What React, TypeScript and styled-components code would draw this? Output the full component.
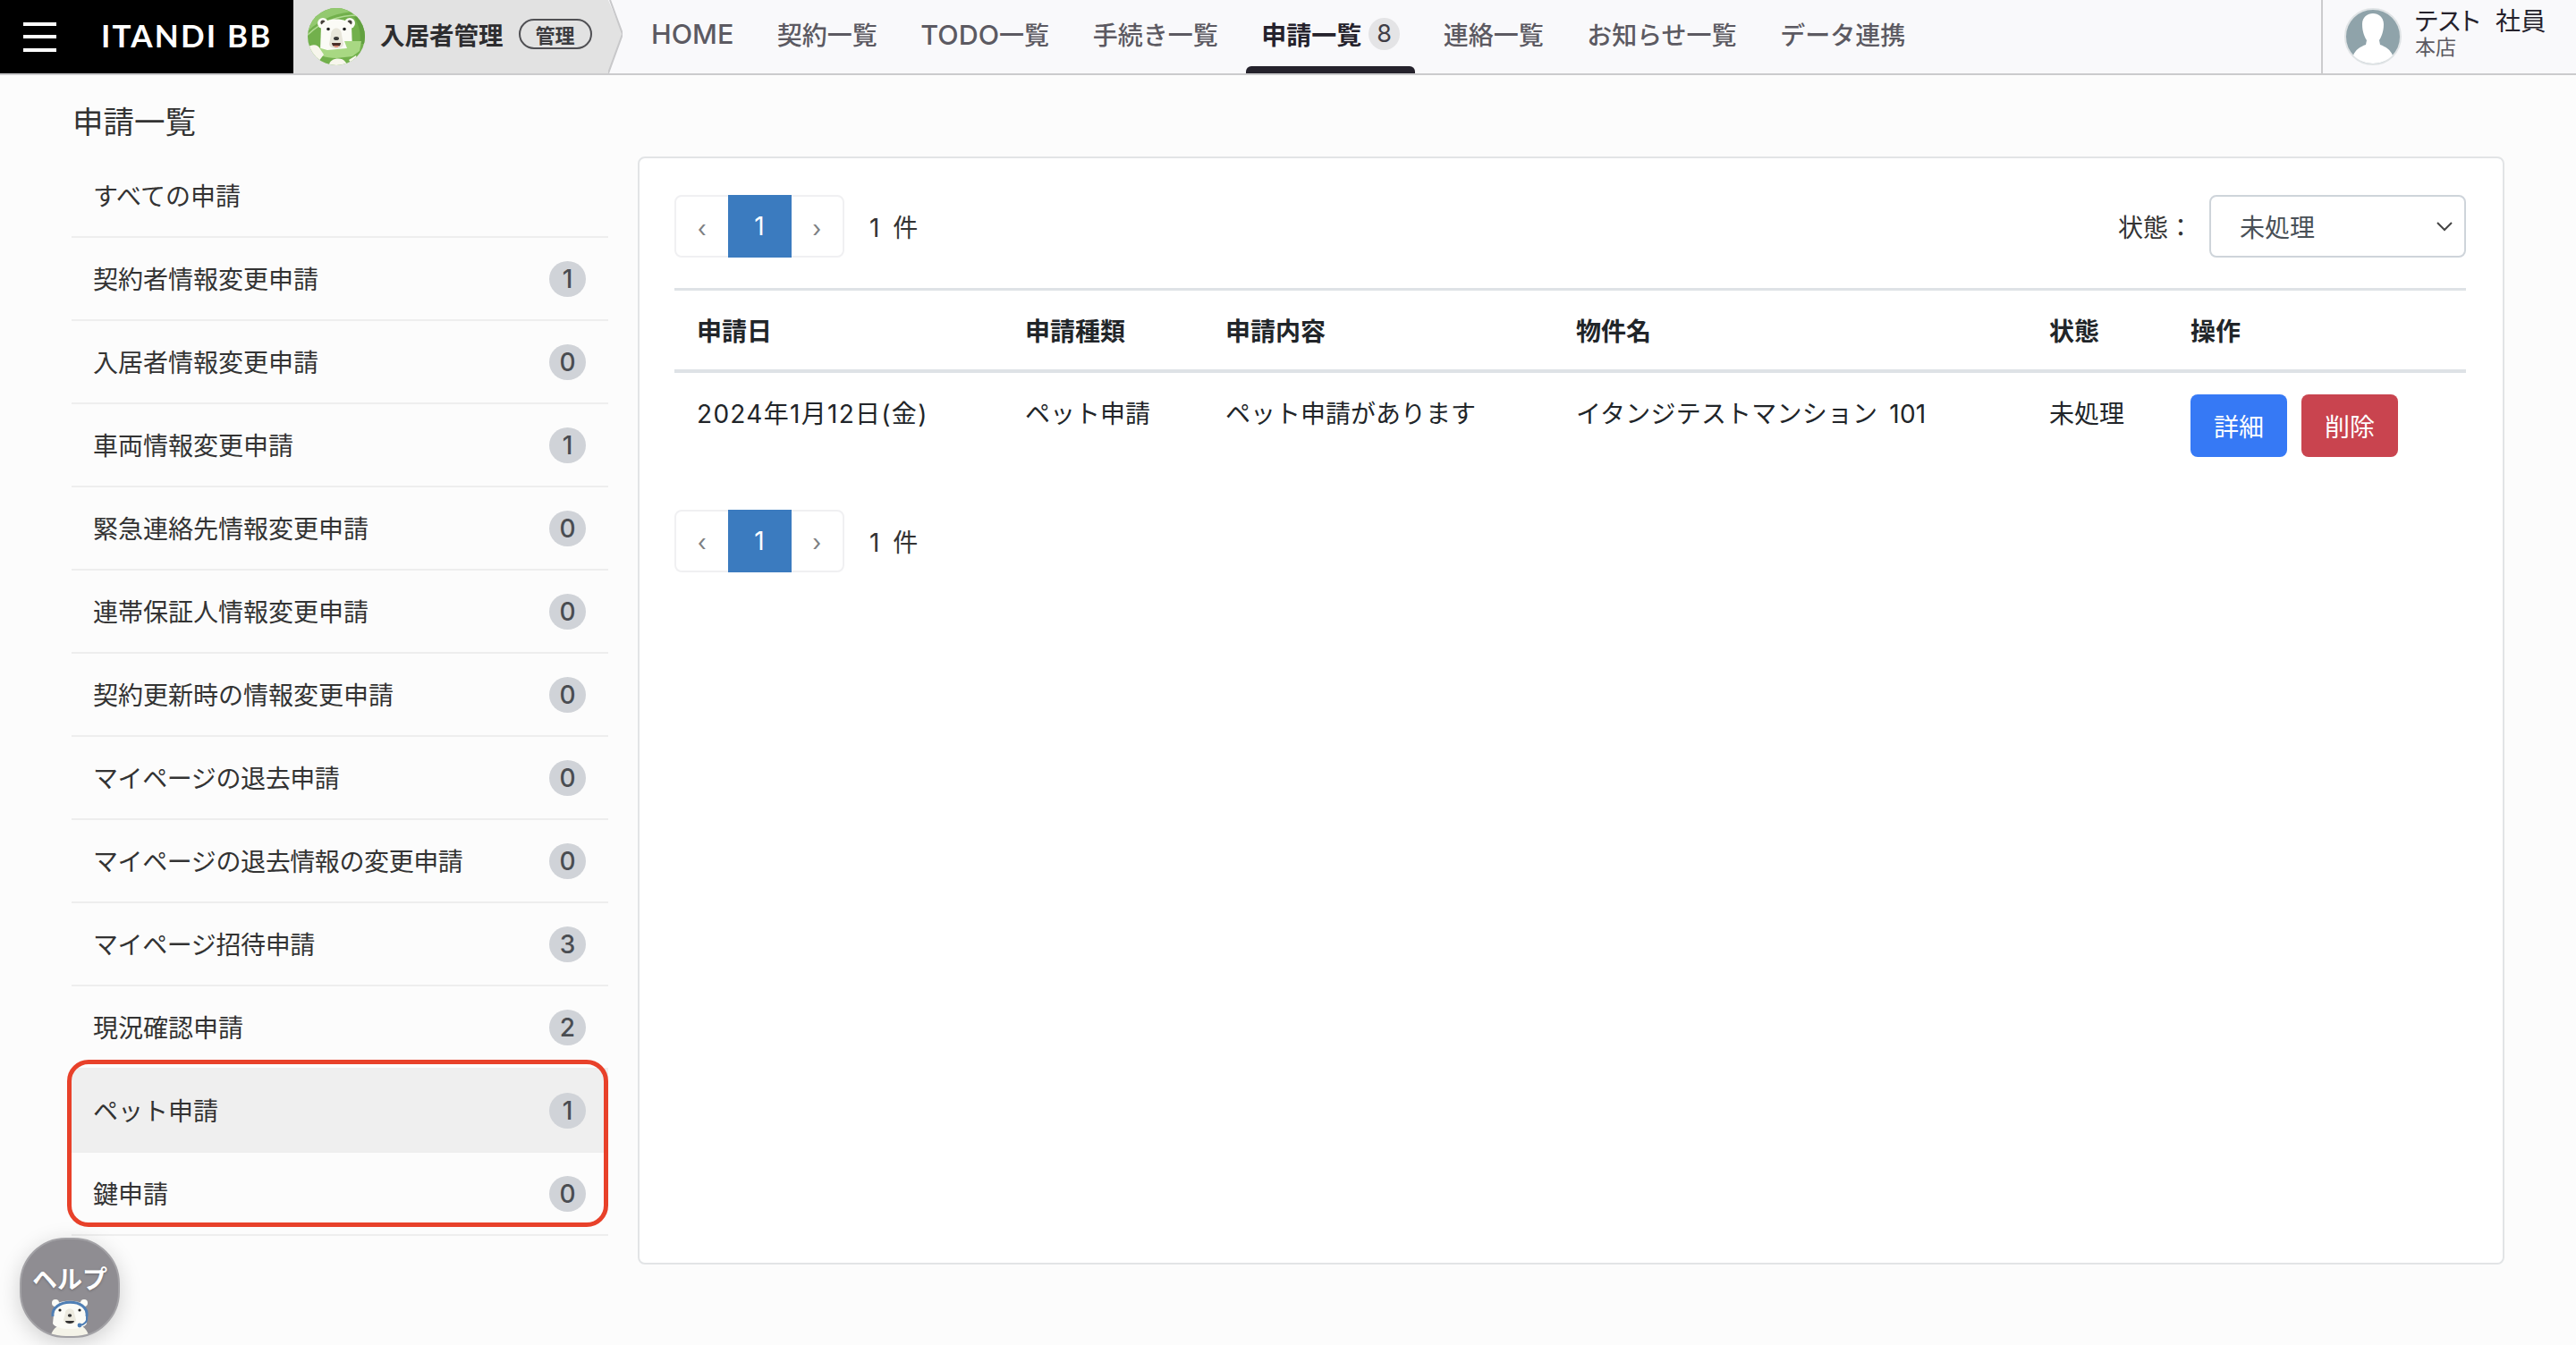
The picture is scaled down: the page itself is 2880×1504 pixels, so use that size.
import React from 'react';
import styled, { createGlobalStyle } from 'styled-components';

const GlobalStyle = createGlobalStyle`
  html, body {
    margin: 0;
    padding: 0;
    background: #fcfcfc;
    font-family: Inter, "Noto Sans CJK JP", "Noto Sans", sans-serif;
    color: #212529;
  }
  * { box-sizing: border-box; }
`;

const Page = styled.div`
  width: 2880px;
  height: 1504px;
  overflow: hidden;
  position: relative;
`;

const Header = styled.header`
  height: 84px;
  display: flex;
  align-items: stretch;
  background: #f9f9fb;
  border-bottom: 2px solid #cbcbcd;
`;

const Brand = styled.div`
  width: 328px;
  background: #000;
  display: flex;
  align-items: center;
  padding-left: 26px;
  gap: 50px;
`;

const Burger = styled.div`
  width: 37px;
  height: 33px;
  display: flex;
  flex-direction: column;
  justify-content: space-between;
  span {
    display: block;
    height: 4px;
    background: #fff;
  }
`;

const Logo = styled.div`
  font-family: Lato, sans-serif;
  font-size: 35px;
  font-weight: 700;
  letter-spacing: 2.2px;
  color: #fff;
  white-space: nowrap;
  margin-bottom: 4px;
`;

const Product = styled.div`
  width: 352px;
  background: #e2e2e2;
  display: flex;
  align-items: center;
  padding-left: 16px;
`;

const ProductName = styled.span`
  font-size: 27.5px;
  font-weight: 700;
  color: #2d2d2f;
  margin: 0 0 7px 17px;
  white-space: nowrap;
`;

const Pill = styled.span`
  margin: 0 0 6px 17px;
  width: 82px;
  height: 34px;
  border: 2px solid #505054;
  border-radius: 17px;
  display: flex;
  align-items: center;
  justify-content: center;
  font-size: 22px;
  font-weight: 700;
  color: #3c3c40;
`;

const Arrow = styled.svg`
  width: 16px;
  height: 82px;
  flex: none;
`;

const Nav = styled.nav`
  display: flex;
  gap: 14.5px;
  margin-left: 15px;
  flex: 1;
`;

const NavItem = styled.a<{ $active?: boolean }>`
  padding: 0 17px 7px;
  display: flex;
  align-items: center;
  gap: 8px;
  height: 82px;
  font-size: 28px;
  white-space: nowrap;
  color: ${(p) => (p.$active ? '#25222c' : '#5c5a62')};
  font-weight: ${(p) => (p.$active ? 700 : 500)};
  position: relative;
  ${(p) =>
    p.$active &&
    `&::after {
      content: '';
      position: absolute;
      left: 0;
      right: 0;
      bottom: 0;
      height: 8px;
      background: #25222c;
      border-radius: 6px 6px 0 0;
    }`}
`;

const NavLatin = styled.span`
  font-size: 30.5px;
`;

const NavBadge = styled.span`
  width: 35px;
  height: 36px;
  border-radius: 50%;
  background: #e4e4e6;
  display: flex;
  align-items: center;
  justify-content: center;
  font-size: 27px;
  font-weight: 400;
  color: #3f3d45;
`;

const UserBox = styled.div`
  width: 285px;
  border-left: 2px solid #cbcbcd;
  display: flex;
  align-items: center;
  padding-left: 24px;
  gap: 15px;
`;

const UserText = styled.div`
  display: flex;
  flex-direction: column;
  margin-bottom: 9px;
`;

const UserName = styled.span`
  font-size: 28px;
  line-height: 32px;
  font-feature-settings: 'palt';
  letter-spacing: 0.4px;
  color: #25222c;
  white-space: pre;
`;

const UserShop = styled.span`
  font-size: 23px;
  line-height: 26px;
  color: #5c5a62;
`;

const Body = styled.div`
  display: flex;
  padding-left: 80px;
`;

const Side = styled.aside`
  width: 600px;
  flex: none;
`;

const Title = styled.h1`
  margin: 0;
  padding: 31px 0 14px 1px;
  font-size: 34.5px;
  line-height: 44px;
  font-weight: 400;
  color: #333;
`;

const Row = styled.div<{ $selected?: boolean }>`
  height: 93px;
  padding: 0 25px 2px 24px;
  display: flex;
  align-items: center;
  justify-content: space-between;
  border-bottom: 2px solid #eeeeee;
  font-size: 28px;
  color: #333;
  background: ${(p) => (p.$selected ? '#efefef' : 'transparent')};
`;

const RowLabel = styled.span<{ $tight?: boolean }>`
  letter-spacing: ${(p) => (p.$tight ? '-0.4px' : '0')};
`;

const Count = styled.span`
  width: 41px;
  height: 40px;
  margin-bottom: -2px;
  border-radius: 50%;
  background: #d0d3d8;
  display: flex;
  align-items: center;
  justify-content: center;
  font-size: 28px;
  font-weight: 500;
  color: #4a4d52;
`;

const Highlighted = styled.div`
  position: relative;
  &::after {
    content: '';
    position: absolute;
    top: -11px;
    left: -5px;
    right: 0;
    bottom: 10px;
    border: 5px solid #e8412a;
    border-radius: 24px;
    pointer-events: none;
  }
`;

const Card = styled.main`
  width: 2087px;
  height: 1239px;
  margin: 91px 0 0 33px;
  padding: 41px 41px 0 39px;
  background: #fff;
  border: 2px solid #e2e4e6;
  border-radius: 8px;
`;

const Toolbar = styled.div`
  display: flex;
  align-items: center;
  justify-content: space-between;
`;

const PagerWrap = styled.div`
  display: flex;
  align-items: center;
  gap: 28px;
  font-size: 28px;
  color: #333;
`;

const Pager = styled.div`
  width: 190px;
  height: 70px;
  display: flex;
  border: 2px solid #f0f0f2;
  border-radius: 8px;
  background: #fff;
`;

const PagerArrow = styled.span`
  flex: 1;
  display: flex;
  align-items: center;
  justify-content: center;
  font-size: 26px;
  color: #7d7f83;
  padding-top: 4px;
`;

const PagerCurrent = styled.span`
  width: 71px;
  margin: -2px 0;
  background: #3b7bbf;
  color: #fff;
  display: flex;
  align-items: center;
  justify-content: center;
  font-size: 28px;
`;

const PagerTotal = styled.span`
  word-spacing: 7px;
`;

const Filter = styled.div`
  display: flex;
  align-items: center;
  gap: 18px;
  font-size: 28px;
  color: #333;
`;

const SelectBox = styled.div`
  width: 287px;
  height: 70px;
  padding: 0 12px 0 32px;
  display: flex;
  align-items: center;
  justify-content: space-between;
  border: 2px solid #ced4da;
  border-radius: 8px;
  font-size: 28px;
  color: #495057;
`;

const Table = styled.table`
  width: 100%;
  margin-top: 34px;
  border-collapse: collapse;
  table-layout: fixed;
  border-top: 3px solid #dee2e6;
`;

const Th = styled.th<{ $w: number }>`
  width: ${(p) => p.$w}px;
  height: 91px;
  padding: 0 25px;
  text-align: left;
  font-size: 28px;
  font-weight: 700;
  color: #212529;
  border-bottom: 4px solid #dee2e6;
`;

const Td = styled.td`
  padding: 25px 25px 31px;
  vertical-align: top;
  font-size: 28px;
  line-height: 42px;
  color: #212529;
  white-space: nowrap;
`;

const DateCell = styled(Td)`
  letter-spacing: 1.3px;
`;

const PropertyCell = styled(Td)`
  word-spacing: 5px;
  letter-spacing: 0.2px;
`;

const Actions = styled.div`
  display: flex;
  gap: 16px;
  margin-top: -1px;
`;

const ActionButton = styled.button<{ $danger?: boolean }>`
  width: 108px;
  height: 70px;
  border: none;
  border-radius: 8px;
  background: ${(p) => (p.$danger ? '#c9444f' : '#3679f5')};
  color: #fff;
  font-family: inherit;
  font-size: 28px;
`;

const BottomPager = styled(PagerWrap)`
  margin-top: 28px;
`;

const Help = styled.div`
  position: absolute;
  left: 22px;
  top: 1384px;
  width: 112px;
  height: 112px;
  border-radius: 46%;
  overflow: hidden;
  background: #8f8d92;
  border: 2px solid #a3a2a6;
  box-shadow: 0 6px 24px rgba(0, 0, 0, 0.18);
  color: #fff;
  text-align: center;
  font-size: 28px;
  font-weight: 700;
  line-height: 40px;
  padding-top: 25px;
  text-shadow: 0 1px 3px rgba(0, 0, 0, 0.25);
`;

const HelpBear = styled.svg`
  position: absolute;
  left: 30px;
  top: 64px;
  width: 48px;
  height: 46px;
`;

const rows = [
  { label: '契約者情報変更申請', count: 1 },
  { label: '入居者情報変更申請', count: 0 },
  { label: '車両情報変更申請', count: 1 },
  { label: '緊急連絡先情報変更申請', count: 0 },
  { label: '連帯保証人情報変更申請', count: 0 },
  { label: '契約更新時の情報変更申請', count: 0 },
  { label: 'マイページの退去申請', count: 0, tight: true },
  { label: 'マイページの退去情報の変更申請', count: 0, tight: true },
  { label: 'マイページ招待申請', count: 3, tight: true },
  { label: '現況確認申請', count: 2 },
];

const PagerBlock = () => (
  <>
    <Pager>
      <PagerArrow>‹</PagerArrow>
      <PagerCurrent>1</PagerCurrent>
      <PagerArrow>›</PagerArrow>
    </Pager>
    <PagerTotal>1 件</PagerTotal>
  </>
);

const AppBear = () => (
  <svg width="64" height="64" viewBox="0 0 64 64" style={{ flex: 'none' }}>
    <defs>
      <clipPath id="bearClip">
        <circle cx="32" cy="32" r="32" />
      </clipPath>
    </defs>
    <g clipPath="url(#bearClip)">
      <rect width="64" height="64" fill="#72b04c" />
      <path d="M0 26C14 12 34 4 56 4L48 -2H10L0 14Z" fill="#93c96f" />
      <path d="M0 30C14 16 34 8 58 8" fill="none" stroke="#b3dc95" strokeWidth="1.5" />
      <path d="M52 10c6 10 8 20 6 30h8V10z" fill="#62a040" />
      <circle cx="17" cy="17" r="6" fill="#fbfbf6" />
      <circle cx="47" cy="17" r="6" fill="#fbfbf6" />
      <circle cx="17" cy="16" r="2.6" fill="#45403a" />
      <circle cx="47" cy="16" r="2.6" fill="#45403a" />
      <path d="M15 20c3-10 31-10 34 0l1 28c-5 6-31 6-36 0z" fill="#fbfbf6" />
      <path d="M26 30c0-10 12-10 12 0l2 10c0 7-16 7-16 0z" fill="#e8e6da" />
      <circle cx="23" cy="23.5" r="1.8" fill="#222" />
      <circle cx="41" cy="23.5" r="1.8" fill="#222" />
      <ellipse cx="32" cy="34" rx="3" ry="2" fill="#3a3a38" />
      <path d="M27 39h10c0 6-10 6-10 0z" fill="#4a2f28" />
      <path d="M29 42h6c0 2.4-6 2.4-6 0z" fill="#e8907a" />
      <path d="M41 37h19l-2 11 -8 6 -18 2c-12 0-22-4-30-10l2-4 18 5 22-2z" fill="#a8d883" />
      <path d="M0 44c4-4 12-4 14 2l4 6-6 8H0zM24 64c0-8 14-10 18-4l4 6zM46 58l8-5 2 6-6 5z" fill="#f7f6ec" />
    </g>
  </svg>
);

const App = () => (
  <Page>
    <GlobalStyle />
    <Header>
      <Brand>
        <Burger>
          <span />
          <span />
          <span />
        </Burger>
        <Logo>ITANDI BB</Logo>
      </Brand>
      <Product>
        <AppBear />
        <ProductName>入居者管理</ProductName>
        <Pill>管理</Pill>
      </Product>
      <Arrow viewBox="0 0 16 82">
        <path d="M0 0L16 38L0 82Z" fill="#e2e2e2" />
        <path d="M2 0L16 38L0 82" fill="none" stroke="#c8c8ca" strokeWidth="2" />
      </Arrow>
      <Nav>
        <NavItem>
          <NavLatin>HOME</NavLatin>
        </NavItem>
        <NavItem>契約一覧</NavItem>
        <NavItem>
          <span>
            <NavLatin>TODO</NavLatin>一覧
          </span>
        </NavItem>
        <NavItem>手続き一覧</NavItem>
        <NavItem $active>
          <span>申請一覧</span>
          <NavBadge>8</NavBadge>
        </NavItem>
        <NavItem>連絡一覧</NavItem>
        <NavItem>お知らせ一覧</NavItem>
        <NavItem>データ連携</NavItem>
      </Nav>
      <UserBox>
        <svg width="64" height="64" viewBox="0 0 64 64" style={{ flex: 'none' }}>
          <circle cx="32" cy="32" r="31" fill="#8fa3aa" stroke="#dfe3e5" strokeWidth="2" />
          <path d="M20 18c0-16 24-16 24 0 0 9-3 15-5 18l1 5c6 2 12 6 14 12-12 12-32 12-44 0 2-6 8-10 14-12l1-5c-2-3-5-9-5-18z" fill="#fff" />
        </svg>
        <UserText>
          <UserName>テスト  社員</UserName>
          <UserShop>本店</UserShop>
        </UserText>
      </UserBox>
    </Header>
    <Body>
      <Side>
        <Title>申請一覧</Title>
        <Row>すべての申請</Row>
        {rows.map((r) => (
          <Row key={r.label}>
            <RowLabel $tight={r.tight}>{r.label}</RowLabel>
            <Count>{r.count}</Count>
          </Row>
        ))}
        <Highlighted>
          <Row $selected>
            ペット申請
            <Count>1</Count>
          </Row>
          <Row>
            鍵申請
            <Count>0</Count>
          </Row>
        </Highlighted>
      </Side>
      <Card>
        <Toolbar>
          <PagerWrap>
            <PagerBlock />
          </PagerWrap>
          <Filter>
            状態：
            <SelectBox>
              未処理
              <svg width="20" height="12" viewBox="0 0 20 12">
                <path d="M2 2l8 8 8-8" fill="none" stroke="#444" strokeWidth="2" />
              </svg>
            </SelectBox>
          </Filter>
        </Toolbar>
        <Table>
          <thead>
            <tr>
              <Th $w={367}>申請日</Th>
              <Th $w={224}>申請種類</Th>
              <Th $w={392}>申請内容</Th>
              <Th $w={529}>物件名</Th>
              <Th $w={158}>状態</Th>
              <Th $w={333}>操作</Th>
            </tr>
          </thead>
          <tbody>
            <tr>
              <DateCell>2024年1月12日(金)</DateCell>
              <Td>ペット申請</Td>
              <Td>ペット申請があります</Td>
              <PropertyCell>イタンジテストマンション 101</PropertyCell>
              <Td>未処理</Td>
              <Td>
                <Actions>
                  <ActionButton>詳細</ActionButton>
                  <ActionButton $danger>削除</ActionButton>
                </Actions>
              </Td>
            </tr>
          </tbody>
        </Table>
        <BottomPager>
          <PagerBlock />
        </BottomPager>
      </Card>
    </Body>
    <Help>
      ヘルプ
      <HelpBear viewBox="0 0 48 46">
        <path d="M2 46c2-9 7-13 12-15h20c5 2 10 6 12 15z" fill="#f4f3e8" />
        <circle cx="8" cy="7" r="4" fill="#fbfbf6" />
        <circle cx="40" cy="7" r="4" fill="#fbfbf6" />
        <path d="M7 10c4-7 30-7 34 0l2 20c-4 8-34 8-38 0z" fill="#fbfbf6" />
        <path d="M5 22C2 2 46 0 43 22" fill="none" stroke="#4f7fb5" strokeWidth="3" />
        <path d="M19 18c0-6 10-6 10 0l2 8c0 6-14 6-14 0z" fill="#eceadf" />
        <circle cx="13" cy="15" r="1.6" fill="#222" />
        <circle cx="35" cy="15" r="1.6" fill="#222" />
        <ellipse cx="24" cy="21" rx="2.2" ry="1.8" fill="#333" />
        <path d="M19 27h10c0 4-10 4-10 0z" fill="#333" />
        <path d="M43 22c1 6-2 9-8 10" fill="none" stroke="#4f7fb5" strokeWidth="2" />
        <circle cx="35" cy="32" r="2.4" fill="#4f7fb5" />
      </HelpBear>
    </Help>
  </Page>
);

export default App;
